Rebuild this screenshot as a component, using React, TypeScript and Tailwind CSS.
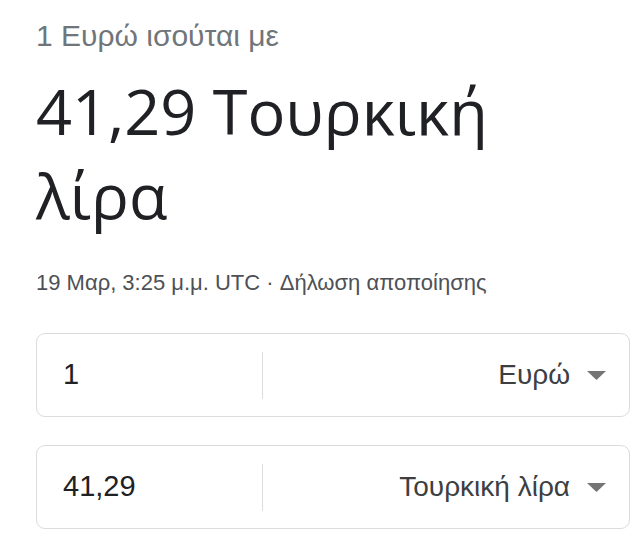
import React from "react";

type ConverterRowProps = {
    amount: string;
    currency: string;
};

function Caret() {
    return (
        <svg width="19" height="9" viewBox="0 0 19 9" className="shrink-0">
            <path d="M0 0 L19 0 L9.5 9 Z" fill="#757575" />
        </svg>
    );
}

function ConverterRow({ amount, currency }: ConverterRowProps) {
    return (
        <div className="flex h-[84px] items-center rounded-[9px] border border-[#dadce0] bg-white">
            <div className="w-[225px] pl-[26px] text-[29px] text-[#202124]">{amount}</div>
            <div className="h-[47px] w-px bg-[#dadce0]" />
            <div className="flex flex-1 items-center justify-end gap-[17px] pr-[23px] text-[28px] text-[#3c4043]">
                <span>{currency}</span>
                <Caret />
            </div>
        </div>
    );
}

export default function App() {
    return (
        <div className="min-h-[560px] w-[640px] bg-white pl-[36px] pr-[10px] pt-[18px] font-['Liberation_Sans',Arial,sans-serif]">
            <div className="text-[30px] leading-[36px] text-[#70757a]">1 Ευρώ ισούται με</div>
            <div className="mt-[15px] font-['Open_Sans','Noto_Sans',sans-serif] text-[63px] leading-[84px] text-[#202124]">
                41,29 Τουρκική λίρα
            </div>
            <div className="mt-[33px] text-[22px] leading-[26px] text-[#4d5156]">
                19 Μαρ, 3:25 μ.μ. UTC · Δήλωση αποποίησης
            </div>
            <div className="mt-[37px] flex flex-col gap-[28px]">
                <ConverterRow amount="1" currency="Ευρώ" />
                <ConverterRow amount="41,29" currency="Τουρκική λίρα" />
            </div>
        </div>
    );
}
